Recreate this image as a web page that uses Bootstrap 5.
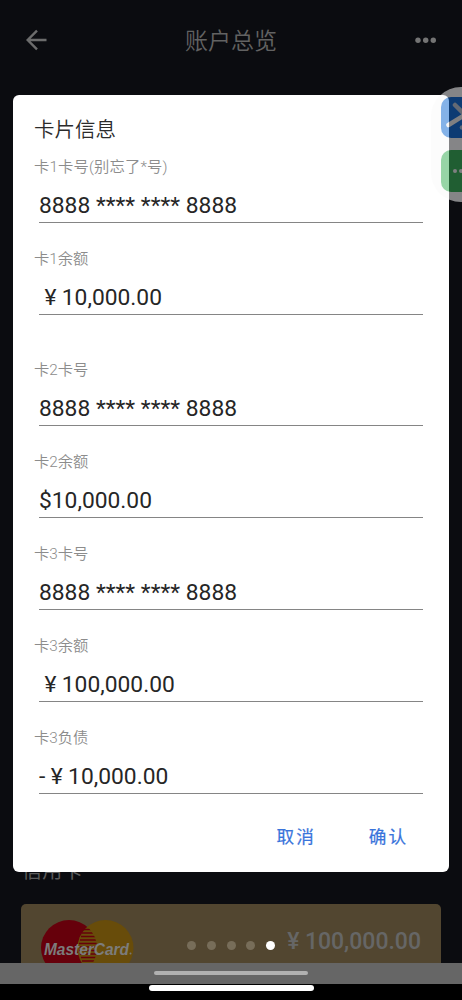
<!DOCTYPE html>
<html lang="zh-CN">
<head>
<meta charset="utf-8">
<meta name="viewport" content="width=device-width, initial-scale=1">
<title>账户总览</title>
<link href="https://cdn.jsdelivr.net/npm/bootstrap@5.3.0/dist/css/bootstrap.min.css" rel="stylesheet">
<style>
body{background:#0b0c10;font-family:Roboto,"Noto Sans CJK SC",sans-serif;}
.screen{width:462px;height:1000px;background:#0b0c10;color:#666}
.topbar{height:81px;padding:0 25px}
.topbar h1{font-size:23px;line-height:30px;font-weight:350;color:#626262;padding:2px 2px 0 0}
.section-title{font-size:20px;line-height:24px;letter-spacing:.3px;padding-left:22px;margin-bottom:21px;color:#5c5c5c}
.credit{height:59px;margin:0 21px;background:#524630;border-radius:5px 5px 0 0}
.pager{gap:10.8px;padding:36.5px 0 0 51px}
.pager i{width:9px;height:9px;border-radius:50%;background:#776d59}
.pager i.on{background:#fff}
.amount{font-size:23px;line-height:30px;font-weight:500;color:#666;padding:23px 20px 0 0}
.yen{display:inline-block;width:1em;text-align:center}
.navband{height:21px;background:#666}
.navband span{width:154px;height:4px;background:#b1b1b1;margin-top:-1px}
.homebar{height:16px;background:#000}
.homebar span{width:165px;height:6px;background:#fff;margin-top:1px}
.dialog-box{left:13px;top:95px;width:436px;height:777px;background:#fff;border-radius:6px;padding:21px 26px 0 21px}
.dialog-box h2{font-size:20.5px;line-height:28px;font-weight:350;color:#2b2b2b;margin:0 0 12px}
.field{height:91.9px}
.field.gap-after{margin-bottom:19.2px}
.field label{display:block;font-size:15.3px;line-height:22px;color:#8c8c8c;font-weight:350}
.field label.hinted{letter-spacing:.16px}
.entry{margin-left:5px;height:45.4px;padding-top:13px;font-size:22.8px;line-height:30px;color:#262626;border-bottom:1.5px solid #858585;white-space:pre}
.actions{padding-right:15px;gap:53px;margin-top:6px}
.actions button{font-size:17.6px;line-height:26px;letter-spacing:2px;font-weight:400;color:#3974db;-webkit-text-stroke:.2px}
.bubble{left:431px;top:87px;width:31px;height:115px;background:#fafafa;border-radius:30px 0 0 30px;opacity:.51}
</style>
</head>
<body>
<main class="screen position-relative overflow-hidden d-flex flex-column">
  <header class="topbar d-flex align-items-center justify-content-between">
    <svg width="24" height="24" viewBox="0 0 24 24" fill="none" stroke="#6c6c6c" stroke-width="2.4"><path d="M21.500 11H3M12 1.700L2.700 11L12 20.300"/></svg>
    <h1 class="m-0">账户总览</h1>
    <svg width="22" height="8" viewBox="0 0 22 8" fill="#747474"><circle cx="3" cy="3.300" r="2.700"/><circle cx="10.700" cy="3.300" r="2.700"/><circle cx="18.300" cy="3.300" r="2.700"/></svg>
  </header>
  <section class="mt-auto">
    <div class="section-title">信用卡</div>
    <div class="credit d-flex overflow-hidden">
      <svg width="115" height="59" viewBox="21 904 115 59" class="flex-shrink-0">
        <defs><clipPath id="redDisc"><circle cx="69" cy="948" r="28"/></clipPath></defs>
        <circle cx="69" cy="948" r="28" fill="#66000b"/>
        <circle cx="105.500" cy="948" r="28" fill="#684c0a"/>
        <g clip-path="url(#redDisc)"><path d="M83.500 929.500H94M82 933H96M81 936.500H97M80 940H97M79 943.500H97M79 947H97M79 950.500H97M80 954H97M81 957.500H97M82 961H97" stroke="#66000b" stroke-width="1.700"/></g>
        <text x="44" y="954.500" font-family="Liberation Sans" font-size="17" font-weight="700" font-style="italic" fill="#7c7c7c" textLength="85" lengthAdjust="spacingAndGlyphs">MasterCard</text>
        <circle cx="130.500" cy="953.500" r="1" fill="#777"/>
      </svg>
      <div class="pager d-flex"><i></i><i></i><i></i><i></i><i class="on"></i></div>
      <div class="amount ms-auto text-nowrap"><span class="yen">¥</span>100,000.00</div>
    </div>
  </section>
  <div class="navband d-flex align-items-center justify-content-center flex-shrink-0"><span class="rounded-pill"></span></div>
  <div class="homebar d-flex justify-content-center flex-shrink-0"><span class="rounded-pill"></span></div>

  <div class="dialog-box position-absolute" role="dialog">
    <h2>卡片信息</h2>
    <div class="field"><label class="hinted">卡1卡号(别忘了*号)</label><div class="entry">8888 **** **** 8888</div></div>
    <div class="field gap-after"><label>卡1余额</label><div class="entry"><span class="yen">¥</span>10,000.00</div></div>
    <div class="field"><label>卡2卡号</label><div class="entry">8888 **** **** 8888</div></div>
    <div class="field"><label>卡2余额</label><div class="entry">$10,000.00</div></div>
    <div class="field"><label>卡3卡号</label><div class="entry">8888 **** **** 8888</div></div>
    <div class="field"><label>卡3余额</label><div class="entry"><span class="yen">¥</span>100,000.00</div></div>
    <div class="field"><label>卡3负债</label><div class="entry">-<span class="yen">¥</span>10,000.00</div></div>
    <div class="actions d-flex justify-content-end">
      <button class="btn p-0 border-0">取消</button>
      <button class="btn p-0 border-0">确认</button>
    </div>
  </div>

  <div class="bubble position-absolute overflow-hidden">
    <svg width="31" height="115" viewBox="431 87 31 115" class="d-block">
      <rect x="441" y="97" width="42" height="41" rx="10" fill="#1069d3"/>
      <path d="M455 105L463 113" stroke="#b9c4d4" stroke-width="4.500" stroke-linecap="round"/>
      <path d="M448.500 125L464 115.500" stroke="#eee" stroke-width="4.500" stroke-linecap="round"/>
      <circle cx="462" cy="127.500" r="2.300" fill="#aebfd8"/>
      <rect x="441" y="150" width="42" height="42" rx="10" fill="#35ad53"/>
      <circle cx="455" cy="171" r="2" fill="#eee"/><circle cx="461" cy="171" r="2" fill="#eee"/>
    </svg>
  </div>
</main>
<script src="https://cdn.jsdelivr.net/npm/bootstrap@5.3.0/dist/js/bootstrap.bundle.min.js"></script>
</body>
</html>
